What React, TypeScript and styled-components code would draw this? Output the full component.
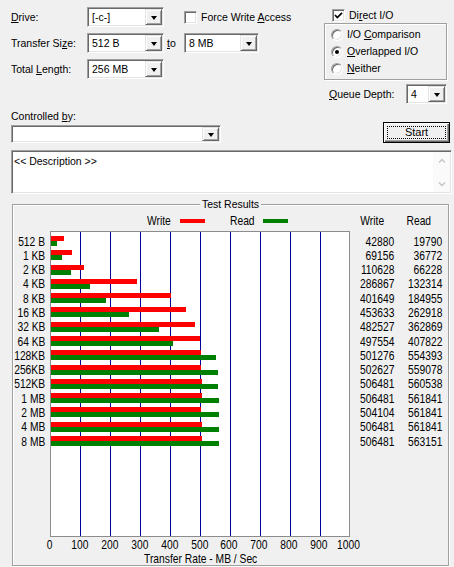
import { Fragment } from "react"
import styled, { createGlobalStyle, css } from "styled-components"

const UI_FONT = `"Liberation Sans", Arial, sans-serif`
const ROW_H = 100 / 7
const PX_PER_UNIT = 0.2985 / 1000

const results = [
  { size: "512 B", write: 42880, read: 19790 },
  { size: "1 KB", write: 69156, read: 36772 },
  { size: "2 KB", write: 110628, read: 66228 },
  { size: "4 KB", write: 286867, read: 132314 },
  { size: "8 KB", write: 401649, read: 184955 },
  { size: "16 KB", write: 453633, read: 262918 },
  { size: "32 KB", write: 482527, read: 362869 },
  { size: "64 KB", write: 497554, read: 407822 },
  { size: "128KB", write: 501276, read: 554393 },
  { size: "256KB", write: 502627, read: 559078 },
  { size: "512KB", write: 506481, read: 560538 },
  { size: "1 MB", write: 506481, read: 561841 },
  { size: "2 MB", write: 504104, read: 561841 },
  { size: "4 MB", write: 506481, read: 561841 },
  { size: "8 MB", write: 506481, read: 563151 },
]

const ticks = [0, 100, 200, 300, 400, 500, 600, 700, 800, 900, 1000]

const GlobalStyle = createGlobalStyle`
  html, body { margin: 0; padding: 0; background: #f0f0f0; }
  body { font-family: ${UI_FONT}; font-size: 10.5px; color: #000; }
  * { box-sizing: border-box; }
`

const sunken = css`
  background: #fff;
  border: 1px solid;
  border-color: #a0a0a0 #fff #fff #a0a0a0;
  box-shadow: inset 1px 1px 0 #696969, inset -1px -1px 0 #e3e3e3;
`

const etched = css`
  border: 1px solid #a0a0a0;
  box-shadow: inset 1px 1px 0 #fff, 1px 1px 0 #fff;
`

const Window = styled.div`
  width: 454px;
  height: 567px;
  overflow: hidden;
  padding: 7px 0 0 11px;
  display: flex;
  flex-direction: column;
  background: #f0f0f0;
  line-height: 13px;
`

const TopArea = styled.div`
  display: flex;
`

const LeftPane = styled.div`
  width: 311px;
  display: flex;
  flex-direction: column;
  gap: 6px;
`

const RightPane = styled.div`
  display: flex;
  flex-direction: column;
`

const FieldRow = styled.div`
  display: flex;
  align-items: center;
  height: 20px;
`

const FieldLabel = styled.span<{ $w: number }>`
  width: ${(p) => p.$w}px;
  flex: none;
  white-space: nowrap;
`

const Key = styled.span`
  text-decoration: underline;
  text-underline-offset: 1px;
`

const ComboBox = styled.div<{ $w: number; $h?: number }>`
  ${sunken}
  width: ${(p) => p.$w}px;
  height: ${(p) => p.$h ?? 20}px;
  padding: 1px;
  display: flex;
  align-items: stretch;
  flex: none;
`

const ComboValue = styled.span`
  flex: 1;
  padding-left: 3px;
  display: flex;
  align-items: center;
  white-space: nowrap;
`

const DropButton = styled.span`
  width: 17px;
  background: #f0f0f0;
  border: 1px solid;
  border-color: #e3e3e3 #696969 #696969 #e3e3e3;
  box-shadow: inset 1px 1px 0 #fff, inset -1px -1px 0 #a0a0a0;
  display: flex;
  align-items: center;
  justify-content: center;

  &::after {
    content: "";
    border-left: 3.5px solid transparent;
    border-right: 3.5px solid transparent;
    border-top: 4px solid #000;
    margin-top: 1px;
  }
`

const CheckLabel = styled.label<{ $indent?: number }>`
  display: flex;
  align-items: center;
  gap: 4px;
  margin-left: ${(p) => p.$indent ?? 0}px;
  white-space: nowrap;
`

const CheckBox = styled.span`
  ${sunken}
  width: 13px;
  height: 13px;
  flex: none;
  display: flex;
  align-items: center;
  justify-content: center;
`

const ToLabel = styled.span`
  width: 17px;
  margin-left: 3px;
`

const DirectRow = styled.div`
  height: 16px;
  padding-left: 10px;
  display: flex;
  align-items: center;
`

const OptionGroup = styled.div`
  ${etched}
  margin-left: 2px;
  width: 123px;
  height: 57px;
  padding: 2px 0 0 6px;
  display: flex;
  flex-direction: column;
`

const RadioRow = styled.div`
  height: 17px;
  display: flex;
  align-items: center;
  gap: 4px;
  white-space: nowrap;
`

const RadioDot = styled.span<{ $on?: boolean }>`
  width: 12px;
  height: 12px;
  border-radius: 50%;
  background: #fff;
  border: 1px solid;
  border-color: #a0a0a0 #fff #fff #a0a0a0;
  box-shadow: inset 1px 1px 0 #696969, inset -1px -1px 0 #e3e3e3;
  display: flex;
  align-items: center;
  justify-content: center;
  flex: none;

  &::after {
    content: "";
    width: 4px;
    height: 4px;
    border-radius: 50%;
    background: ${(p) => (p.$on ? "#000" : "transparent")};
  }
`

const QueueRow = styled.div`
  margin-top: 4px;
  height: 20px;
  padding-left: 7px;
  display: flex;
  align-items: center;
`

const ControlSection = styled.div`
  margin-top: 6px;
  display: flex;
  align-items: flex-end;
`

const ControlColumn = styled.div`
  display: flex;
  flex-direction: column;
  gap: 2px;
`

const StartButton = styled.button`
  margin: 0 4px 0 auto;
  width: 67px;
  height: 21px;
  padding: 3px;
  border: 1px solid #000;
  background: #f0f0f0;
  box-shadow: inset 1px 1px 0 #fff, inset -1px -1px 0 #696969, inset -2px -2px 0 #a0a0a0;
  font: inherit;
  color: #000;
  display: flex;
`

const FocusRing = styled.span`
  flex: 1;
  border: 1px dotted #000;
  display: flex;
  align-items: center;
  justify-content: center;
  font-size: 11px;
`

const Description = styled.div`
  ${sunken}
  margin-top: 7px;
  width: 441px;
  height: 44px;
  padding: 1px;
  display: flex;
`

const DescText = styled.div`
  flex: 1;
  padding: 3px 0 0 1px;
`

const ScrollBar = styled.div`
  width: 17px;
  background: #fafafa;
  display: flex;
  flex-direction: column;
  justify-content: space-between;
  align-items: center;
  padding: 6px 0 5px;
`

const ResultsGroup = styled.div`
  ${etched}
  margin: 10px 0 0 1px;
  width: 437px;
  height: 362px;
  display: flex;
  flex-direction: column;
`

const GroupTitle = styled.span`
  align-self: center;
  margin-top: -7px;
  padding: 0 2px;
  height: 13px;
  background: #f0f0f0;
`

const ChartGrid = styled.div`
  display: grid;
  grid-template-columns: 37px 300px 98px;
  grid-template-rows: 20px 306px 28px;
  font-size: 13px;
  line-height: ${ROW_H}px;
`

/* the chart text in the dialog is a tall, narrow face */
const Cond = styled.span<{ $origin?: string }>`
  display: inline-block;
  white-space: nowrap;
  transform: scaleX(0.79);
  transform-origin: ${(p) => p.$origin ?? "center"};
`

const Legend = styled.div`
  grid-column: 2;
  padding-left: 97px;
  display: flex;
  align-items: center;
`

const LegendText = styled.span`
  width: 33px;
  flex: none;
  display: flex;
`

const Swatch = styled.span<{ $color: string }>`
  width: 25px;
  height: 4px;
  background: ${(p) => p.$color};
  margin-right: 25px;
`

const ValueGrid = styled.div<{ $pad?: number }>`
  grid-column: 3;
  display: grid;
  grid-template-columns: 44px 48px;
  grid-auto-rows: ${ROW_H}px;
  align-content: ${(p) => (p.$pad === undefined ? "center" : "start")};
  padding-top: ${(p) => p.$pad ?? 0}px;
  text-align: right;
`

const HeadCell = styled.span<{ $right: number }>`
  padding-right: ${(p) => p.$right}px;
`

const SizeLabels = styled.div`
  grid-column: 1;
  padding: 3.6px 5px 0 0;
  display: flex;
  flex-direction: column;
  align-items: flex-end;
`

const RowText = styled.span`
  height: ${ROW_H}px;
  white-space: nowrap;
`

const Plot = styled.div`
  grid-column: 2;
  border: 1px solid #8c8c8c;
  padding-top: 4px;
  background-color: #fff;
  background-image: linear-gradient(to right, #000099 1px, transparent 1px);
  background-size: 30px 100%;
  background-position: 29px 0;
  background-repeat: repeat-x;
  display: flex;
  flex-direction: column;
`

const BarRow = styled.div`
  height: ${ROW_H}px;
  flex: none;
`

const Bar = styled.div<{ $color: string }>`
  height: 5px;
  background: ${(p) => p.$color};
`

const Axis = styled.div`
  grid-column: 2;
  display: flex;
  flex-direction: column;
  line-height: 14px;
  padding-top: 1px;
`

const TickRow = styled.div`
  display: flex;
  margin-left: -15px;
`

const Tick = styled.span`
  width: 29.9px;
  flex: none;
  text-align: center;
  white-space: nowrap;
`

const AxisTitle = styled.span`
  text-align: center;
  padding-left: 1px;
`

function Combo({ value, w, h }: { value: string; w: number; h?: number }) {
  return (
    <ComboBox $w={w} $h={h}>
      <ComboValue>{value}</ComboValue>
      <DropButton />
    </ComboBox>
  )
}

function Check({ checked }: { checked?: boolean }) {
  return (
    <CheckBox>
      {checked && (
        <svg width="9" height="9" viewBox="0 0 9 9">
          <polyline points="1,4 3.3,6.5 8,1.8" fill="none" stroke="#000" strokeWidth="1.7" />
        </svg>
      )}
    </CheckBox>
  )
}

function Chevron({ up }: { up?: boolean }) {
  return (
    <svg width="8" height="5" viewBox="0 0 8 5">
      <polyline
        points={up ? "1,4.5 4,1.5 7,4.5" : "1,0.5 4,3.5 7,0.5"}
        fill="none"
        stroke="#c4c4c4"
        strokeWidth="1.4"
      />
    </svg>
  )
}

export default function App() {
  return (
    <>
      <GlobalStyle />
      <Window>
        <TopArea>
          <LeftPane>
            <FieldRow>
              <FieldLabel $w={76}>
                <Key>D</Key>rive:
              </FieldLabel>
              <Combo value="[-c-]" w={77} />
              <CheckLabel $indent={20}>
                <Check />
                <span>
                  Force Write <Key>A</Key>ccess
                </span>
              </CheckLabel>
            </FieldRow>
            <FieldRow>
              <FieldLabel $w={76}>
                Transfer Si<Key>z</Key>e:
              </FieldLabel>
              <Combo value="512 B" w={77} />
              <ToLabel>
                <Key>t</Key>o
              </ToLabel>
              <Combo value="8 MB" w={75} />
            </FieldRow>
            <FieldRow>
              <FieldLabel $w={76}>
                Total <Key>L</Key>ength:
              </FieldLabel>
              <Combo value="256 MB" w={77} />
            </FieldRow>
          </LeftPane>
          <RightPane>
            <DirectRow>
              <CheckLabel>
                <Check checked />
                <span>
                  Di<Key>r</Key>ect I/O
                </span>
              </CheckLabel>
            </DirectRow>
            <OptionGroup>
              <RadioRow>
                <RadioDot />
                <span>
                  I/O <Key>C</Key>omparison
                </span>
              </RadioRow>
              <RadioRow>
                <RadioDot $on />
                <span>
                  <Key>O</Key>verlapped I/O
                </span>
              </RadioRow>
              <RadioRow>
                <RadioDot />
                <span>
                  <Key>N</Key>either
                </span>
              </RadioRow>
            </OptionGroup>
            <QueueRow>
              <FieldLabel $w={77}>
                <Key>Q</Key>ueue Depth:
              </FieldLabel>
              <Combo value="4" w={41} />
            </QueueRow>
          </RightPane>
        </TopArea>

        <ControlSection>
          <ControlColumn>
            <span>
              Controlled <Key>b</Key>y:
            </span>
            <Combo value="" w={210} h={18} />
          </ControlColumn>
          <StartButton>
            <FocusRing>Start</FocusRing>
          </StartButton>
        </ControlSection>

        <Description>
          <DescText>{"<< Description >>"}</DescText>
          <ScrollBar>
            <Chevron up />
            <Chevron />
          </ScrollBar>
        </Description>

        <ResultsGroup>
          <GroupTitle>Test Results</GroupTitle>
          <ChartGrid>
            <Legend>
              <LegendText>
                <Cond $origin="left">Write</Cond>
              </LegendText>
              <Swatch $color="#ff0000" />
              <LegendText>
                <Cond $origin="left">Read</Cond>
              </LegendText>
              <Swatch $color="#008000" />
            </Legend>
            <ValueGrid>
              <HeadCell $right={10}>
                <Cond $origin="right">Write</Cond>
              </HeadCell>
              <HeadCell $right={11}>
                <Cond $origin="right">Read</Cond>
              </HeadCell>
            </ValueGrid>

            <SizeLabels>
              {results.map((r) => (
                <RowText key={r.size}>
                  <Cond $origin="right">{r.size}</Cond>
                </RowText>
              ))}
            </SizeLabels>
            <Plot>
              {results.map((r) => (
                <BarRow key={r.size}>
                  <Bar $color="#ff0000" style={{ width: r.write * PX_PER_UNIT }} />
                  <Bar $color="#008000" style={{ width: r.read * PX_PER_UNIT }} />
                </BarRow>
              ))}
            </Plot>
            <ValueGrid $pad={3.6}>
              {results.map((r) => (
                <Fragment key={r.size}>
                  <RowText>
                    <Cond $origin="right">{r.write}</Cond>
                  </RowText>
                  <RowText>
                    <Cond $origin="right">{r.read}</Cond>
                  </RowText>
                </Fragment>
              ))}
            </ValueGrid>

            <Axis>
              <TickRow>
                {ticks.map((t) => (
                  <Tick key={t}>
                    <Cond>{t}</Cond>
                  </Tick>
                ))}
              </TickRow>
              <AxisTitle>
                <Cond>Transfer Rate - MB / Sec</Cond>
              </AxisTitle>
            </Axis>
          </ChartGrid>
        </ResultsGroup>
      </Window>
    </>
  )
}
